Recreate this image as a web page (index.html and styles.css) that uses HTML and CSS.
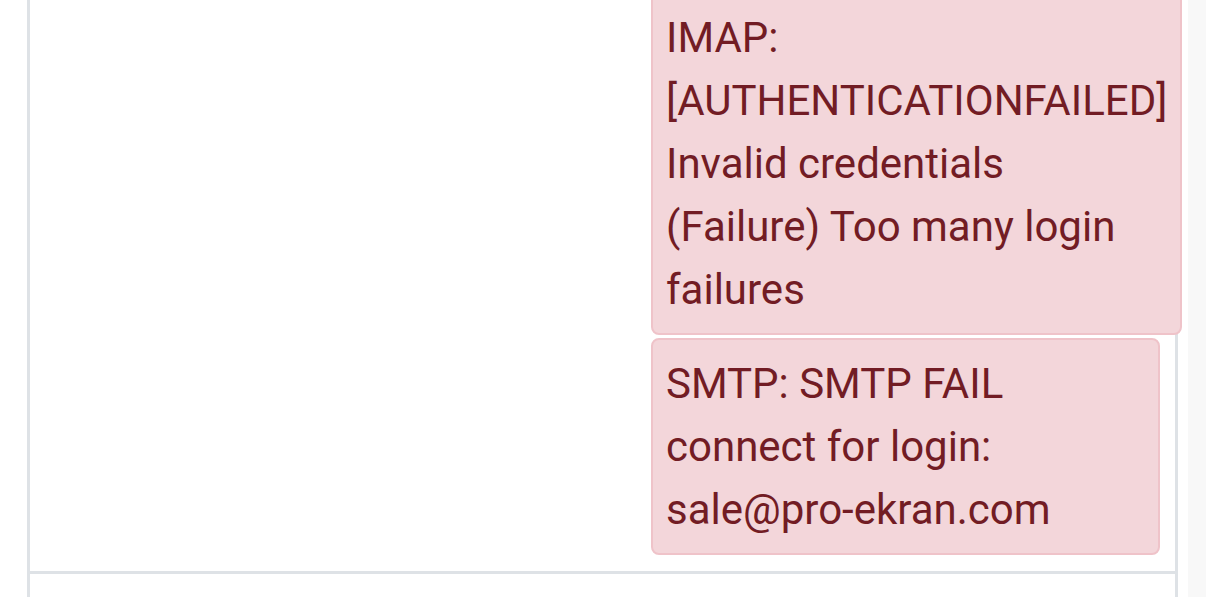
FILE: index.html
```html
<!DOCTYPE html>
<html lang="en">
<head>
<meta charset="utf-8">
<title>Mail check</title>
<link rel="stylesheet" href="styles.css">
</head>
<body>
  <div class="page">
    <div class="panel">
      <div class="row">
        <div class="cell cell-left"></div>
        <div class="cell cell-right">
          <div class="alert">IMAP: [AUTHENTICATIONFAILED] Invalid credentials (Failure) Too many login failures</div>
          <div class="alert">SMTP: SMTP FAIL connect for login: sale@pro-ekran.com</div>
        </div>
      </div>
      <div class="row row-next"></div>
    </div>
    <div class="track"></div>
  </div>
</body>
</html>
```
FILE: styles.css
```css
html, body {
  margin: 0;
  padding: 0;
  background: #ffffff;
  height: 100%;
  overflow: hidden;
}

.page {
  display: flex;
  height: 597px;
  padding-left: 27px;
  font-family: Roboto, "Noto Sans", sans-serif;
}

.panel {
  width: 1151px;
  box-sizing: border-box;
  border-left: 3px solid #dee2e6;
  border-right: 3px solid #dee2e6;
  display: flex;
  flex-direction: column;
}

.row {
  display: grid;
  grid-template-columns: 621px minmax(0, 1fr);
  border-bottom: 3px solid #dee2e6;
}

.cell-right {
  min-width: 0;
  padding: 0 15px 16px 0;
  margin-top: -8px;
}

.alert {
  width: fit-content;
  box-sizing: border-box;
  background: #f3d6da;
  border: 2px solid #efc3c9;
  border-radius: 8px;
  padding: 12px 13px;
  margin-bottom: 3px;
  color: #721c24;
  font-size: 42px;
  line-height: 63px;
}

.alert:last-child {
  margin-bottom: 0;
}

.row-next {
  flex: 1;
  border-bottom: none;
}

.track {
  width: 18px;
  margin-left: auto;
  background: #f8f8f8;
}
```
